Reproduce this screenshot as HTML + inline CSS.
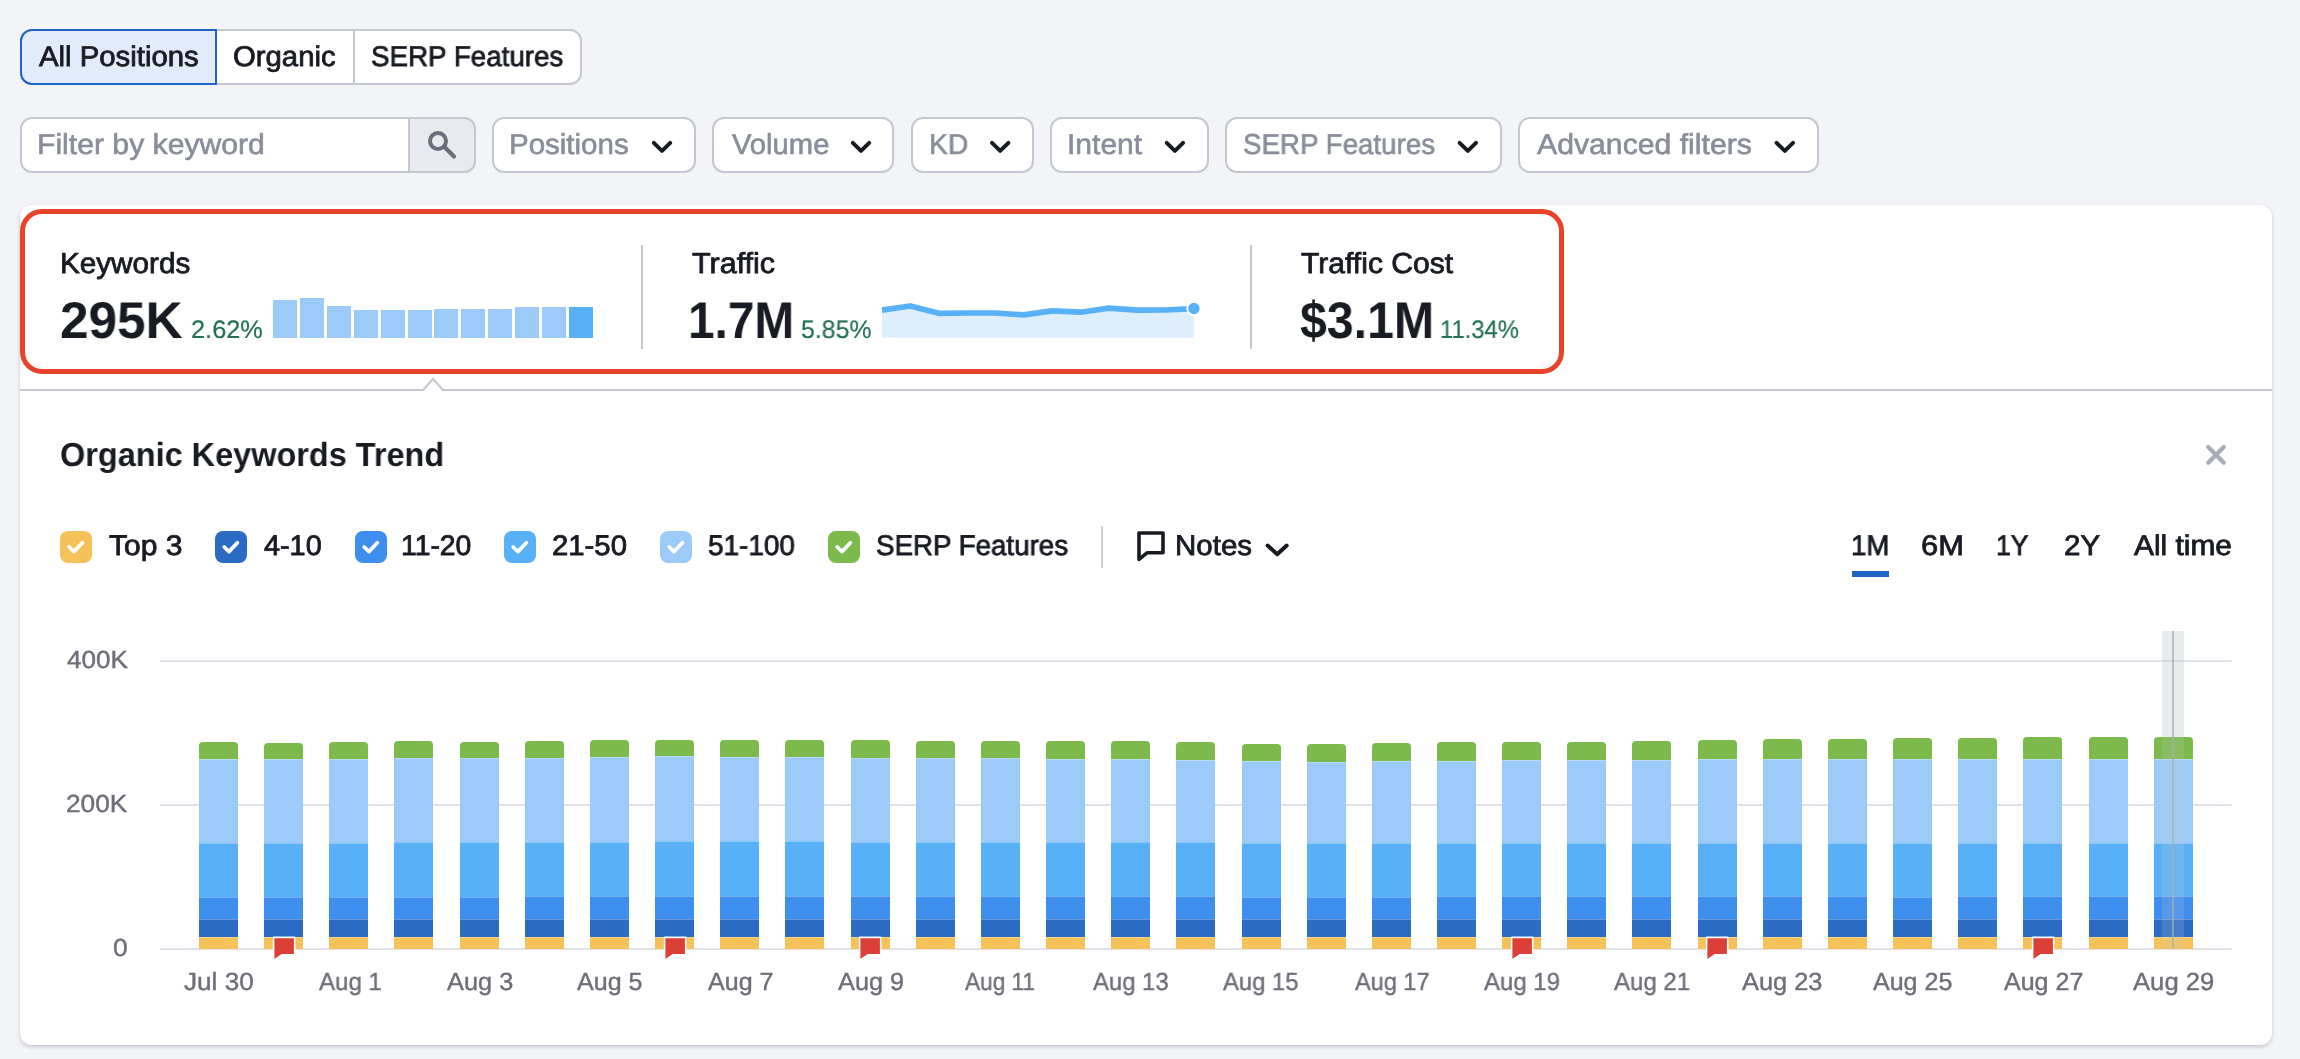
<!DOCTYPE html>
<html><head><meta charset="utf-8"><style>
html,body{margin:0;padding:0}
body{width:2300px;height:1059px;overflow:hidden;background:#f3f4f8;position:relative;font-family:"Liberation Sans", sans-serif}
.a{position:absolute}
.t{position:absolute;line-height:1;white-space:nowrap;transform-origin:0 0;will-change:transform}

</style></head><body>
<div class="a" style="left:20px;top:29px;width:562px;height:56px;box-sizing:border-box;border:2px solid #c4c7cf;border-radius:12px;background:#fff"></div>
<div class="a" style="left:353px;top:31px;width:2px;height:52px;background:#c4c7cf"></div>
<div class="a" style="left:20px;top:29px;width:197px;height:56px;box-sizing:border-box;border:2px solid #1f64c4;border-radius:12px 0 0 12px;background:#e2ebf9"></div>
<div class="a" style="left:20px;top:117px;width:456px;height:56px;box-sizing:border-box;border:2px solid #c4c7cf;border-radius:12px;background:#fff"></div>
<div class="a" style="left:408px;top:117px;width:68px;height:56px;box-sizing:border-box;border:2px solid #c4c7cf;border-radius:0 12px 12px 0;background:#e9eaef"></div>
<svg class="a" style="left:0;top:0" width="2300" height="1059"><circle cx="438" cy="141" r="8" fill="none" stroke="#6c6e79" stroke-width="4"/><path d="M445.5 148 L454 156.5" stroke="#6c6e79" stroke-width="4.2" stroke-linecap="round"/></svg>
<div class="a" style="left:492px;top:117px;width:204px;height:56px;box-sizing:border-box;border:2px solid #c4c7cf;border-radius:12px;background:#fff"></div>
<svg class="a" style="left:0;top:0" width="2300" height="1059"><path d="M653.8 142.8 L662.0 150.9 L670.2 142.8" fill="none" stroke="#191b23" stroke-width="4" stroke-linecap="round" stroke-linejoin="round"/></svg>
<div class="a" style="left:712px;top:117px;width:182px;height:56px;box-sizing:border-box;border:2px solid #c4c7cf;border-radius:12px;background:#fff"></div>
<svg class="a" style="left:0;top:0" width="2300" height="1059"><path d="M852.8 142.8 L861.0 150.9 L869.2 142.8" fill="none" stroke="#191b23" stroke-width="4" stroke-linecap="round" stroke-linejoin="round"/></svg>
<div class="a" style="left:911px;top:117px;width:123px;height:56px;box-sizing:border-box;border:2px solid #c4c7cf;border-radius:12px;background:#fff"></div>
<svg class="a" style="left:0;top:0" width="2300" height="1059"><path d="M992.0 142.8 L1000.2 150.9 L1008.4 142.8" fill="none" stroke="#191b23" stroke-width="4" stroke-linecap="round" stroke-linejoin="round"/></svg>
<div class="a" style="left:1050px;top:117px;width:159px;height:56px;box-sizing:border-box;border:2px solid #c4c7cf;border-radius:12px;background:#fff"></div>
<svg class="a" style="left:0;top:0" width="2300" height="1059"><path d="M1166.7 142.8 L1174.9 150.9 L1183.1 142.8" fill="none" stroke="#191b23" stroke-width="4" stroke-linecap="round" stroke-linejoin="round"/></svg>
<div class="a" style="left:1225px;top:117px;width:277px;height:56px;box-sizing:border-box;border:2px solid #c4c7cf;border-radius:12px;background:#fff"></div>
<svg class="a" style="left:0;top:0" width="2300" height="1059"><path d="M1459.6 142.8 L1467.8 150.9 L1476.0 142.8" fill="none" stroke="#191b23" stroke-width="4" stroke-linecap="round" stroke-linejoin="round"/></svg>
<div class="a" style="left:1518px;top:117px;width:301px;height:56px;box-sizing:border-box;border:2px solid #c4c7cf;border-radius:12px;background:#fff"></div>
<svg class="a" style="left:0;top:0" width="2300" height="1059"><path d="M1776.6 142.8 L1784.8 150.9 L1793.0 142.8" fill="none" stroke="#191b23" stroke-width="4" stroke-linecap="round" stroke-linejoin="round"/></svg>
<div class="a" style="left:20px;top:205px;width:2252px;height:840px;border-radius:12px;background:#fff;box-shadow:0 2px 4px rgba(25,27,35,0.2)"></div>
<svg class="a" style="left:0;top:0" width="2300" height="1059"><path d="M20 390 L423.2 390 L433 378.8 L442.8 390 L2272 390" fill="none" stroke="#c4c7cf" stroke-width="2.2"/></svg>
<div class="a" style="left:20px;top:209px;width:1544px;height:165px;box-sizing:border-box;border:5px solid #e8432a;border-radius:22px"></div>
<div class="a" style="left:640.5px;top:245px;width:2px;height:104px;background:#c4c7cf"></div>
<div class="a" style="left:1250px;top:245px;width:2px;height:104px;background:#c4c7cf"></div>
<div class="a" style="left:273.06px;top:299.80px;width:24.0px;height:38.10px;background:#9ccbf9"></div>
<div class="a" style="left:299.96px;top:297.90px;width:24.0px;height:40.00px;background:#9ccbf9"></div>
<div class="a" style="left:326.86px;top:306.20px;width:24.0px;height:31.70px;background:#9ccbf9"></div>
<div class="a" style="left:353.76px;top:310.30px;width:24.0px;height:27.60px;background:#9ccbf9"></div>
<div class="a" style="left:380.66px;top:309.60px;width:24.0px;height:28.30px;background:#9ccbf9"></div>
<div class="a" style="left:407.56px;top:310.10px;width:24.0px;height:27.80px;background:#9ccbf9"></div>
<div class="a" style="left:434.46px;top:309.20px;width:24.0px;height:28.70px;background:#9ccbf9"></div>
<div class="a" style="left:461.36px;top:308.80px;width:24.0px;height:29.10px;background:#9ccbf9"></div>
<div class="a" style="left:488.26px;top:308.50px;width:24.0px;height:29.40px;background:#9ccbf9"></div>
<div class="a" style="left:515.16px;top:307.10px;width:24.0px;height:30.80px;background:#9ccbf9"></div>
<div class="a" style="left:542.06px;top:307.40px;width:24.0px;height:30.50px;background:#9ccbf9"></div>
<div class="a" style="left:568.96px;top:306.60px;width:24.0px;height:31.30px;background:#58b0f7"></div>
<svg class="a" style="left:0;top:0" width="2300" height="1059"><path d="M882.00 310.10 L910.35 306.00 L938.70 313.30 L967.05 313.00 L995.40 313.00 L1023.75 314.90 L1052.10 310.90 L1080.45 312.20 L1108.80 308.10 L1137.15 310.10 L1165.50 310.00 L1193.85 308.70 L1193.85 337.7 L882.0 337.7 Z" fill="#ddeefd"/><path d="M882.00 310.10 L910.35 306.00 L938.70 313.30 L967.05 313.00 L995.40 313.00 L1023.75 314.90 L1052.10 310.90 L1080.45 312.20 L1108.80 308.10 L1137.15 310.10 L1165.50 310.00 L1193.85 308.70" fill="none" stroke="#58b0f7" stroke-width="5.7" stroke-linejoin="round"/><circle cx="1193.9" cy="308.5" r="6.6" fill="#58b0f7" stroke="#fff" stroke-width="1.8"/></svg>
<svg class="a" style="left:0;top:0" width="2300" height="1059"><path d="M2208.2 447 L2223.8 462.8 M2223.8 447 L2208.2 462.8" stroke="#a9abb6" stroke-width="4.2" stroke-linecap="round"/></svg>
<svg class="a" style="left:60.3px;top:531px" width="32" height="32"><rect x="0" y="0" width="32" height="32" rx="8" fill="#f5c25a"/><path d="M9.2 16.0 L14.0 20.6 L22.4 11.8" fill="none" stroke="#fff" stroke-width="3.7" stroke-linecap="round" stroke-linejoin="round"/></svg>
<svg class="a" style="left:215.0px;top:531px" width="32" height="32"><rect x="0" y="0" width="32" height="32" rx="8" fill="#2a6cc4"/><path d="M9.2 16.0 L14.0 20.6 L22.4 11.8" fill="none" stroke="#fff" stroke-width="3.7" stroke-linecap="round" stroke-linejoin="round"/></svg>
<svg class="a" style="left:355.0px;top:531px" width="32" height="32"><rect x="0" y="0" width="32" height="32" rx="8" fill="#3d8eed"/><path d="M9.2 16.0 L14.0 20.6 L22.4 11.8" fill="none" stroke="#fff" stroke-width="3.7" stroke-linecap="round" stroke-linejoin="round"/></svg>
<svg class="a" style="left:504.0px;top:531px" width="32" height="32"><rect x="0" y="0" width="32" height="32" rx="8" fill="#58b0f6"/><path d="M9.2 16.0 L14.0 20.6 L22.4 11.8" fill="none" stroke="#fff" stroke-width="3.7" stroke-linecap="round" stroke-linejoin="round"/></svg>
<svg class="a" style="left:660.0px;top:531px" width="32" height="32"><rect x="0" y="0" width="32" height="32" rx="8" fill="#9ccbf9"/><path d="M9.2 16.0 L14.0 20.6 L22.4 11.8" fill="none" stroke="#fff" stroke-width="3.7" stroke-linecap="round" stroke-linejoin="round"/></svg>
<svg class="a" style="left:828.0px;top:531px" width="32" height="32"><rect x="0" y="0" width="32" height="32" rx="8" fill="#7cba4b"/><path d="M9.2 16.0 L14.0 20.6 L22.4 11.8" fill="none" stroke="#fff" stroke-width="3.7" stroke-linecap="round" stroke-linejoin="round"/></svg>
<div class="a" style="left:1101px;top:526px;width:2px;height:42px;background:#cccdd2"></div>
<svg class="a" style="left:0;top:0" width="2300" height="1059"><path d="M1139 533 L1163 533 L1163 552.8 L1147 552.8 L1139 559.3 Z" fill="none" stroke="#191b23" stroke-width="3.6" stroke-linejoin="round"/></svg>
<svg class="a" style="left:0;top:0" width="2300" height="1059"><path d="M1267.6 545.5 L1277.2 554.2 L1286.7 545.5" fill="none" stroke="#191b23" stroke-width="4" stroke-linecap="round" stroke-linejoin="round"/></svg>
<div class="a" style="left:1852px;top:571px;width:37px;height:6px;background:#1f64c4"></div>
<div class="a" style="left:160px;top:660px;width:2072px;height:2px;background:#e0e1e9"></div>
<div class="a" style="left:160px;top:804px;width:2072px;height:2px;background:#e0e1e9"></div>
<div class="a" style="left:160px;top:948px;width:2072px;height:2px;background:#e0e1e9"></div>
<div class="a" style="left:2162px;top:631px;width:22.4px;height:318px;background:rgba(185,196,196,0.32)"></div>
<div class="a" style="left:199.00px;top:742px;width:39.0px;height:17px;background:#7cba4b;border-radius:4px 4px 0 0;"></div>
<div class="a" style="left:199.00px;top:759px;width:39.0px;height:84px;background:#9ccbf9;"></div>
<div class="a" style="left:199.00px;top:843px;width:39.0px;height:54px;background:#58b0f6;"></div>
<div class="a" style="left:199.00px;top:897px;width:39.0px;height:22px;background:#3d8eed;"></div>
<div class="a" style="left:199.00px;top:919px;width:39.0px;height:18px;background:#2a6cc4;"></div>
<div class="a" style="left:199.00px;top:937px;width:39.0px;height:12px;background:#f5c25a;"></div>
<div class="a" style="left:199.00px;top:759px;width:39.0px;height:1px;background:rgba(255,255,255,0.3)"></div>
<div class="a" style="left:199.00px;top:843px;width:39.0px;height:1px;background:rgba(255,255,255,0.3)"></div>
<div class="a" style="left:199.00px;top:897px;width:39.0px;height:1px;background:rgba(255,255,255,0.3)"></div>
<div class="a" style="left:199.00px;top:919px;width:39.0px;height:1px;background:rgba(255,255,255,0.3)"></div>
<div class="a" style="left:199.00px;top:937px;width:39.0px;height:1px;background:rgba(255,255,255,0.3)"></div>
<div class="a" style="left:264.16px;top:743px;width:39.0px;height:16px;background:#7cba4b;border-radius:4px 4px 0 0;"></div>
<div class="a" style="left:264.16px;top:759px;width:39.0px;height:84px;background:#9ccbf9;"></div>
<div class="a" style="left:264.16px;top:843px;width:39.0px;height:54px;background:#58b0f6;"></div>
<div class="a" style="left:264.16px;top:897px;width:39.0px;height:22px;background:#3d8eed;"></div>
<div class="a" style="left:264.16px;top:919px;width:39.0px;height:18px;background:#2a6cc4;"></div>
<div class="a" style="left:264.16px;top:937px;width:39.0px;height:12px;background:#f5c25a;"></div>
<div class="a" style="left:264.16px;top:759px;width:39.0px;height:1px;background:rgba(255,255,255,0.3)"></div>
<div class="a" style="left:264.16px;top:843px;width:39.0px;height:1px;background:rgba(255,255,255,0.3)"></div>
<div class="a" style="left:264.16px;top:897px;width:39.0px;height:1px;background:rgba(255,255,255,0.3)"></div>
<div class="a" style="left:264.16px;top:919px;width:39.0px;height:1px;background:rgba(255,255,255,0.3)"></div>
<div class="a" style="left:264.16px;top:937px;width:39.0px;height:1px;background:rgba(255,255,255,0.3)"></div>
<div class="a" style="left:329.31px;top:742px;width:39.0px;height:17px;background:#7cba4b;border-radius:4px 4px 0 0;"></div>
<div class="a" style="left:329.31px;top:759px;width:39.0px;height:84px;background:#9ccbf9;"></div>
<div class="a" style="left:329.31px;top:843px;width:39.0px;height:54px;background:#58b0f6;"></div>
<div class="a" style="left:329.31px;top:897px;width:39.0px;height:22px;background:#3d8eed;"></div>
<div class="a" style="left:329.31px;top:919px;width:39.0px;height:18px;background:#2a6cc4;"></div>
<div class="a" style="left:329.31px;top:937px;width:39.0px;height:12px;background:#f5c25a;"></div>
<div class="a" style="left:329.31px;top:759px;width:39.0px;height:1px;background:rgba(255,255,255,0.3)"></div>
<div class="a" style="left:329.31px;top:843px;width:39.0px;height:1px;background:rgba(255,255,255,0.3)"></div>
<div class="a" style="left:329.31px;top:897px;width:39.0px;height:1px;background:rgba(255,255,255,0.3)"></div>
<div class="a" style="left:329.31px;top:919px;width:39.0px;height:1px;background:rgba(255,255,255,0.3)"></div>
<div class="a" style="left:329.31px;top:937px;width:39.0px;height:1px;background:rgba(255,255,255,0.3)"></div>
<div class="a" style="left:394.47px;top:741px;width:39.0px;height:17px;background:#7cba4b;border-radius:4px 4px 0 0;"></div>
<div class="a" style="left:394.47px;top:758px;width:39.0px;height:84px;background:#9ccbf9;"></div>
<div class="a" style="left:394.47px;top:842px;width:39.0px;height:55px;background:#58b0f6;"></div>
<div class="a" style="left:394.47px;top:897px;width:39.0px;height:22px;background:#3d8eed;"></div>
<div class="a" style="left:394.47px;top:919px;width:39.0px;height:18px;background:#2a6cc4;"></div>
<div class="a" style="left:394.47px;top:937px;width:39.0px;height:12px;background:#f5c25a;"></div>
<div class="a" style="left:394.47px;top:758px;width:39.0px;height:1px;background:rgba(255,255,255,0.3)"></div>
<div class="a" style="left:394.47px;top:842px;width:39.0px;height:1px;background:rgba(255,255,255,0.3)"></div>
<div class="a" style="left:394.47px;top:897px;width:39.0px;height:1px;background:rgba(255,255,255,0.3)"></div>
<div class="a" style="left:394.47px;top:919px;width:39.0px;height:1px;background:rgba(255,255,255,0.3)"></div>
<div class="a" style="left:394.47px;top:937px;width:39.0px;height:1px;background:rgba(255,255,255,0.3)"></div>
<div class="a" style="left:459.63px;top:742px;width:39.0px;height:16px;background:#7cba4b;border-radius:4px 4px 0 0;"></div>
<div class="a" style="left:459.63px;top:758px;width:39.0px;height:84px;background:#9ccbf9;"></div>
<div class="a" style="left:459.63px;top:842px;width:39.0px;height:55px;background:#58b0f6;"></div>
<div class="a" style="left:459.63px;top:897px;width:39.0px;height:22px;background:#3d8eed;"></div>
<div class="a" style="left:459.63px;top:919px;width:39.0px;height:18px;background:#2a6cc4;"></div>
<div class="a" style="left:459.63px;top:937px;width:39.0px;height:12px;background:#f5c25a;"></div>
<div class="a" style="left:459.63px;top:758px;width:39.0px;height:1px;background:rgba(255,255,255,0.3)"></div>
<div class="a" style="left:459.63px;top:842px;width:39.0px;height:1px;background:rgba(255,255,255,0.3)"></div>
<div class="a" style="left:459.63px;top:897px;width:39.0px;height:1px;background:rgba(255,255,255,0.3)"></div>
<div class="a" style="left:459.63px;top:919px;width:39.0px;height:1px;background:rgba(255,255,255,0.3)"></div>
<div class="a" style="left:459.63px;top:937px;width:39.0px;height:1px;background:rgba(255,255,255,0.3)"></div>
<div class="a" style="left:524.78px;top:741px;width:39.0px;height:17px;background:#7cba4b;border-radius:4px 4px 0 0;"></div>
<div class="a" style="left:524.78px;top:758px;width:39.0px;height:84px;background:#9ccbf9;"></div>
<div class="a" style="left:524.78px;top:842px;width:39.0px;height:54px;background:#58b0f6;"></div>
<div class="a" style="left:524.78px;top:896px;width:39.0px;height:23px;background:#3d8eed;"></div>
<div class="a" style="left:524.78px;top:919px;width:39.0px;height:18px;background:#2a6cc4;"></div>
<div class="a" style="left:524.78px;top:937px;width:39.0px;height:12px;background:#f5c25a;"></div>
<div class="a" style="left:524.78px;top:758px;width:39.0px;height:1px;background:rgba(255,255,255,0.3)"></div>
<div class="a" style="left:524.78px;top:842px;width:39.0px;height:1px;background:rgba(255,255,255,0.3)"></div>
<div class="a" style="left:524.78px;top:896px;width:39.0px;height:1px;background:rgba(255,255,255,0.3)"></div>
<div class="a" style="left:524.78px;top:919px;width:39.0px;height:1px;background:rgba(255,255,255,0.3)"></div>
<div class="a" style="left:524.78px;top:937px;width:39.0px;height:1px;background:rgba(255,255,255,0.3)"></div>
<div class="a" style="left:589.94px;top:740px;width:39.0px;height:17px;background:#7cba4b;border-radius:4px 4px 0 0;"></div>
<div class="a" style="left:589.94px;top:757px;width:39.0px;height:85px;background:#9ccbf9;"></div>
<div class="a" style="left:589.94px;top:842px;width:39.0px;height:54px;background:#58b0f6;"></div>
<div class="a" style="left:589.94px;top:896px;width:39.0px;height:23px;background:#3d8eed;"></div>
<div class="a" style="left:589.94px;top:919px;width:39.0px;height:18px;background:#2a6cc4;"></div>
<div class="a" style="left:589.94px;top:937px;width:39.0px;height:12px;background:#f5c25a;"></div>
<div class="a" style="left:589.94px;top:757px;width:39.0px;height:1px;background:rgba(255,255,255,0.3)"></div>
<div class="a" style="left:589.94px;top:842px;width:39.0px;height:1px;background:rgba(255,255,255,0.3)"></div>
<div class="a" style="left:589.94px;top:896px;width:39.0px;height:1px;background:rgba(255,255,255,0.3)"></div>
<div class="a" style="left:589.94px;top:919px;width:39.0px;height:1px;background:rgba(255,255,255,0.3)"></div>
<div class="a" style="left:589.94px;top:937px;width:39.0px;height:1px;background:rgba(255,255,255,0.3)"></div>
<div class="a" style="left:655.10px;top:740px;width:39.0px;height:16px;background:#7cba4b;border-radius:4px 4px 0 0;"></div>
<div class="a" style="left:655.10px;top:756px;width:39.0px;height:85px;background:#9ccbf9;"></div>
<div class="a" style="left:655.10px;top:841px;width:39.0px;height:55px;background:#58b0f6;"></div>
<div class="a" style="left:655.10px;top:896px;width:39.0px;height:23px;background:#3d8eed;"></div>
<div class="a" style="left:655.10px;top:919px;width:39.0px;height:18px;background:#2a6cc4;"></div>
<div class="a" style="left:655.10px;top:937px;width:39.0px;height:12px;background:#f5c25a;"></div>
<div class="a" style="left:655.10px;top:756px;width:39.0px;height:1px;background:rgba(255,255,255,0.3)"></div>
<div class="a" style="left:655.10px;top:841px;width:39.0px;height:1px;background:rgba(255,255,255,0.3)"></div>
<div class="a" style="left:655.10px;top:896px;width:39.0px;height:1px;background:rgba(255,255,255,0.3)"></div>
<div class="a" style="left:655.10px;top:919px;width:39.0px;height:1px;background:rgba(255,255,255,0.3)"></div>
<div class="a" style="left:655.10px;top:937px;width:39.0px;height:1px;background:rgba(255,255,255,0.3)"></div>
<div class="a" style="left:720.25px;top:740px;width:39.0px;height:17px;background:#7cba4b;border-radius:4px 4px 0 0;"></div>
<div class="a" style="left:720.25px;top:757px;width:39.0px;height:84px;background:#9ccbf9;"></div>
<div class="a" style="left:720.25px;top:841px;width:39.0px;height:55px;background:#58b0f6;"></div>
<div class="a" style="left:720.25px;top:896px;width:39.0px;height:23px;background:#3d8eed;"></div>
<div class="a" style="left:720.25px;top:919px;width:39.0px;height:18px;background:#2a6cc4;"></div>
<div class="a" style="left:720.25px;top:937px;width:39.0px;height:12px;background:#f5c25a;"></div>
<div class="a" style="left:720.25px;top:757px;width:39.0px;height:1px;background:rgba(255,255,255,0.3)"></div>
<div class="a" style="left:720.25px;top:841px;width:39.0px;height:1px;background:rgba(255,255,255,0.3)"></div>
<div class="a" style="left:720.25px;top:896px;width:39.0px;height:1px;background:rgba(255,255,255,0.3)"></div>
<div class="a" style="left:720.25px;top:919px;width:39.0px;height:1px;background:rgba(255,255,255,0.3)"></div>
<div class="a" style="left:720.25px;top:937px;width:39.0px;height:1px;background:rgba(255,255,255,0.3)"></div>
<div class="a" style="left:785.41px;top:740px;width:39.0px;height:17px;background:#7cba4b;border-radius:4px 4px 0 0;"></div>
<div class="a" style="left:785.41px;top:757px;width:39.0px;height:84px;background:#9ccbf9;"></div>
<div class="a" style="left:785.41px;top:841px;width:39.0px;height:55px;background:#58b0f6;"></div>
<div class="a" style="left:785.41px;top:896px;width:39.0px;height:23px;background:#3d8eed;"></div>
<div class="a" style="left:785.41px;top:919px;width:39.0px;height:18px;background:#2a6cc4;"></div>
<div class="a" style="left:785.41px;top:937px;width:39.0px;height:12px;background:#f5c25a;"></div>
<div class="a" style="left:785.41px;top:757px;width:39.0px;height:1px;background:rgba(255,255,255,0.3)"></div>
<div class="a" style="left:785.41px;top:841px;width:39.0px;height:1px;background:rgba(255,255,255,0.3)"></div>
<div class="a" style="left:785.41px;top:896px;width:39.0px;height:1px;background:rgba(255,255,255,0.3)"></div>
<div class="a" style="left:785.41px;top:919px;width:39.0px;height:1px;background:rgba(255,255,255,0.3)"></div>
<div class="a" style="left:785.41px;top:937px;width:39.0px;height:1px;background:rgba(255,255,255,0.3)"></div>
<div class="a" style="left:850.57px;top:740px;width:39.0px;height:18px;background:#7cba4b;border-radius:4px 4px 0 0;"></div>
<div class="a" style="left:850.57px;top:758px;width:39.0px;height:84px;background:#9ccbf9;"></div>
<div class="a" style="left:850.57px;top:842px;width:39.0px;height:54px;background:#58b0f6;"></div>
<div class="a" style="left:850.57px;top:896px;width:39.0px;height:23px;background:#3d8eed;"></div>
<div class="a" style="left:850.57px;top:919px;width:39.0px;height:18px;background:#2a6cc4;"></div>
<div class="a" style="left:850.57px;top:937px;width:39.0px;height:12px;background:#f5c25a;"></div>
<div class="a" style="left:850.57px;top:758px;width:39.0px;height:1px;background:rgba(255,255,255,0.3)"></div>
<div class="a" style="left:850.57px;top:842px;width:39.0px;height:1px;background:rgba(255,255,255,0.3)"></div>
<div class="a" style="left:850.57px;top:896px;width:39.0px;height:1px;background:rgba(255,255,255,0.3)"></div>
<div class="a" style="left:850.57px;top:919px;width:39.0px;height:1px;background:rgba(255,255,255,0.3)"></div>
<div class="a" style="left:850.57px;top:937px;width:39.0px;height:1px;background:rgba(255,255,255,0.3)"></div>
<div class="a" style="left:915.72px;top:741px;width:39.0px;height:17px;background:#7cba4b;border-radius:4px 4px 0 0;"></div>
<div class="a" style="left:915.72px;top:758px;width:39.0px;height:84px;background:#9ccbf9;"></div>
<div class="a" style="left:915.72px;top:842px;width:39.0px;height:54px;background:#58b0f6;"></div>
<div class="a" style="left:915.72px;top:896px;width:39.0px;height:23px;background:#3d8eed;"></div>
<div class="a" style="left:915.72px;top:919px;width:39.0px;height:18px;background:#2a6cc4;"></div>
<div class="a" style="left:915.72px;top:937px;width:39.0px;height:12px;background:#f5c25a;"></div>
<div class="a" style="left:915.72px;top:758px;width:39.0px;height:1px;background:rgba(255,255,255,0.3)"></div>
<div class="a" style="left:915.72px;top:842px;width:39.0px;height:1px;background:rgba(255,255,255,0.3)"></div>
<div class="a" style="left:915.72px;top:896px;width:39.0px;height:1px;background:rgba(255,255,255,0.3)"></div>
<div class="a" style="left:915.72px;top:919px;width:39.0px;height:1px;background:rgba(255,255,255,0.3)"></div>
<div class="a" style="left:915.72px;top:937px;width:39.0px;height:1px;background:rgba(255,255,255,0.3)"></div>
<div class="a" style="left:980.88px;top:741px;width:39.0px;height:17px;background:#7cba4b;border-radius:4px 4px 0 0;"></div>
<div class="a" style="left:980.88px;top:758px;width:39.0px;height:84px;background:#9ccbf9;"></div>
<div class="a" style="left:980.88px;top:842px;width:39.0px;height:54px;background:#58b0f6;"></div>
<div class="a" style="left:980.88px;top:896px;width:39.0px;height:23px;background:#3d8eed;"></div>
<div class="a" style="left:980.88px;top:919px;width:39.0px;height:18px;background:#2a6cc4;"></div>
<div class="a" style="left:980.88px;top:937px;width:39.0px;height:12px;background:#f5c25a;"></div>
<div class="a" style="left:980.88px;top:758px;width:39.0px;height:1px;background:rgba(255,255,255,0.3)"></div>
<div class="a" style="left:980.88px;top:842px;width:39.0px;height:1px;background:rgba(255,255,255,0.3)"></div>
<div class="a" style="left:980.88px;top:896px;width:39.0px;height:1px;background:rgba(255,255,255,0.3)"></div>
<div class="a" style="left:980.88px;top:919px;width:39.0px;height:1px;background:rgba(255,255,255,0.3)"></div>
<div class="a" style="left:980.88px;top:937px;width:39.0px;height:1px;background:rgba(255,255,255,0.3)"></div>
<div class="a" style="left:1046.04px;top:741px;width:39.0px;height:18px;background:#7cba4b;border-radius:4px 4px 0 0;"></div>
<div class="a" style="left:1046.04px;top:759px;width:39.0px;height:83px;background:#9ccbf9;"></div>
<div class="a" style="left:1046.04px;top:842px;width:39.0px;height:54px;background:#58b0f6;"></div>
<div class="a" style="left:1046.04px;top:896px;width:39.0px;height:23px;background:#3d8eed;"></div>
<div class="a" style="left:1046.04px;top:919px;width:39.0px;height:18px;background:#2a6cc4;"></div>
<div class="a" style="left:1046.04px;top:937px;width:39.0px;height:12px;background:#f5c25a;"></div>
<div class="a" style="left:1046.04px;top:759px;width:39.0px;height:1px;background:rgba(255,255,255,0.3)"></div>
<div class="a" style="left:1046.04px;top:842px;width:39.0px;height:1px;background:rgba(255,255,255,0.3)"></div>
<div class="a" style="left:1046.04px;top:896px;width:39.0px;height:1px;background:rgba(255,255,255,0.3)"></div>
<div class="a" style="left:1046.04px;top:919px;width:39.0px;height:1px;background:rgba(255,255,255,0.3)"></div>
<div class="a" style="left:1046.04px;top:937px;width:39.0px;height:1px;background:rgba(255,255,255,0.3)"></div>
<div class="a" style="left:1111.19px;top:741px;width:39.0px;height:18px;background:#7cba4b;border-radius:4px 4px 0 0;"></div>
<div class="a" style="left:1111.19px;top:759px;width:39.0px;height:83px;background:#9ccbf9;"></div>
<div class="a" style="left:1111.19px;top:842px;width:39.0px;height:54px;background:#58b0f6;"></div>
<div class="a" style="left:1111.19px;top:896px;width:39.0px;height:23px;background:#3d8eed;"></div>
<div class="a" style="left:1111.19px;top:919px;width:39.0px;height:18px;background:#2a6cc4;"></div>
<div class="a" style="left:1111.19px;top:937px;width:39.0px;height:12px;background:#f5c25a;"></div>
<div class="a" style="left:1111.19px;top:759px;width:39.0px;height:1px;background:rgba(255,255,255,0.3)"></div>
<div class="a" style="left:1111.19px;top:842px;width:39.0px;height:1px;background:rgba(255,255,255,0.3)"></div>
<div class="a" style="left:1111.19px;top:896px;width:39.0px;height:1px;background:rgba(255,255,255,0.3)"></div>
<div class="a" style="left:1111.19px;top:919px;width:39.0px;height:1px;background:rgba(255,255,255,0.3)"></div>
<div class="a" style="left:1111.19px;top:937px;width:39.0px;height:1px;background:rgba(255,255,255,0.3)"></div>
<div class="a" style="left:1176.35px;top:742px;width:39.0px;height:18px;background:#7cba4b;border-radius:4px 4px 0 0;"></div>
<div class="a" style="left:1176.35px;top:760px;width:39.0px;height:82px;background:#9ccbf9;"></div>
<div class="a" style="left:1176.35px;top:842px;width:39.0px;height:54px;background:#58b0f6;"></div>
<div class="a" style="left:1176.35px;top:896px;width:39.0px;height:23px;background:#3d8eed;"></div>
<div class="a" style="left:1176.35px;top:919px;width:39.0px;height:18px;background:#2a6cc4;"></div>
<div class="a" style="left:1176.35px;top:937px;width:39.0px;height:12px;background:#f5c25a;"></div>
<div class="a" style="left:1176.35px;top:760px;width:39.0px;height:1px;background:rgba(255,255,255,0.3)"></div>
<div class="a" style="left:1176.35px;top:842px;width:39.0px;height:1px;background:rgba(255,255,255,0.3)"></div>
<div class="a" style="left:1176.35px;top:896px;width:39.0px;height:1px;background:rgba(255,255,255,0.3)"></div>
<div class="a" style="left:1176.35px;top:919px;width:39.0px;height:1px;background:rgba(255,255,255,0.3)"></div>
<div class="a" style="left:1176.35px;top:937px;width:39.0px;height:1px;background:rgba(255,255,255,0.3)"></div>
<div class="a" style="left:1241.51px;top:744px;width:39.0px;height:17px;background:#7cba4b;border-radius:4px 4px 0 0;"></div>
<div class="a" style="left:1241.51px;top:761px;width:39.0px;height:82px;background:#9ccbf9;"></div>
<div class="a" style="left:1241.51px;top:843px;width:39.0px;height:54px;background:#58b0f6;"></div>
<div class="a" style="left:1241.51px;top:897px;width:39.0px;height:22px;background:#3d8eed;"></div>
<div class="a" style="left:1241.51px;top:919px;width:39.0px;height:18px;background:#2a6cc4;"></div>
<div class="a" style="left:1241.51px;top:937px;width:39.0px;height:12px;background:#f5c25a;"></div>
<div class="a" style="left:1241.51px;top:761px;width:39.0px;height:1px;background:rgba(255,255,255,0.3)"></div>
<div class="a" style="left:1241.51px;top:843px;width:39.0px;height:1px;background:rgba(255,255,255,0.3)"></div>
<div class="a" style="left:1241.51px;top:897px;width:39.0px;height:1px;background:rgba(255,255,255,0.3)"></div>
<div class="a" style="left:1241.51px;top:919px;width:39.0px;height:1px;background:rgba(255,255,255,0.3)"></div>
<div class="a" style="left:1241.51px;top:937px;width:39.0px;height:1px;background:rgba(255,255,255,0.3)"></div>
<div class="a" style="left:1306.66px;top:744px;width:39.0px;height:18px;background:#7cba4b;border-radius:4px 4px 0 0;"></div>
<div class="a" style="left:1306.66px;top:762px;width:39.0px;height:81px;background:#9ccbf9;"></div>
<div class="a" style="left:1306.66px;top:843px;width:39.0px;height:54px;background:#58b0f6;"></div>
<div class="a" style="left:1306.66px;top:897px;width:39.0px;height:22px;background:#3d8eed;"></div>
<div class="a" style="left:1306.66px;top:919px;width:39.0px;height:18px;background:#2a6cc4;"></div>
<div class="a" style="left:1306.66px;top:937px;width:39.0px;height:12px;background:#f5c25a;"></div>
<div class="a" style="left:1306.66px;top:762px;width:39.0px;height:1px;background:rgba(255,255,255,0.3)"></div>
<div class="a" style="left:1306.66px;top:843px;width:39.0px;height:1px;background:rgba(255,255,255,0.3)"></div>
<div class="a" style="left:1306.66px;top:897px;width:39.0px;height:1px;background:rgba(255,255,255,0.3)"></div>
<div class="a" style="left:1306.66px;top:919px;width:39.0px;height:1px;background:rgba(255,255,255,0.3)"></div>
<div class="a" style="left:1306.66px;top:937px;width:39.0px;height:1px;background:rgba(255,255,255,0.3)"></div>
<div class="a" style="left:1371.82px;top:743px;width:39.0px;height:18px;background:#7cba4b;border-radius:4px 4px 0 0;"></div>
<div class="a" style="left:1371.82px;top:761px;width:39.0px;height:82px;background:#9ccbf9;"></div>
<div class="a" style="left:1371.82px;top:843px;width:39.0px;height:54px;background:#58b0f6;"></div>
<div class="a" style="left:1371.82px;top:897px;width:39.0px;height:22px;background:#3d8eed;"></div>
<div class="a" style="left:1371.82px;top:919px;width:39.0px;height:18px;background:#2a6cc4;"></div>
<div class="a" style="left:1371.82px;top:937px;width:39.0px;height:12px;background:#f5c25a;"></div>
<div class="a" style="left:1371.82px;top:761px;width:39.0px;height:1px;background:rgba(255,255,255,0.3)"></div>
<div class="a" style="left:1371.82px;top:843px;width:39.0px;height:1px;background:rgba(255,255,255,0.3)"></div>
<div class="a" style="left:1371.82px;top:897px;width:39.0px;height:1px;background:rgba(255,255,255,0.3)"></div>
<div class="a" style="left:1371.82px;top:919px;width:39.0px;height:1px;background:rgba(255,255,255,0.3)"></div>
<div class="a" style="left:1371.82px;top:937px;width:39.0px;height:1px;background:rgba(255,255,255,0.3)"></div>
<div class="a" style="left:1436.98px;top:742px;width:39.0px;height:19px;background:#7cba4b;border-radius:4px 4px 0 0;"></div>
<div class="a" style="left:1436.98px;top:761px;width:39.0px;height:82px;background:#9ccbf9;"></div>
<div class="a" style="left:1436.98px;top:843px;width:39.0px;height:53px;background:#58b0f6;"></div>
<div class="a" style="left:1436.98px;top:896px;width:39.0px;height:23px;background:#3d8eed;"></div>
<div class="a" style="left:1436.98px;top:919px;width:39.0px;height:18px;background:#2a6cc4;"></div>
<div class="a" style="left:1436.98px;top:937px;width:39.0px;height:12px;background:#f5c25a;"></div>
<div class="a" style="left:1436.98px;top:761px;width:39.0px;height:1px;background:rgba(255,255,255,0.3)"></div>
<div class="a" style="left:1436.98px;top:843px;width:39.0px;height:1px;background:rgba(255,255,255,0.3)"></div>
<div class="a" style="left:1436.98px;top:896px;width:39.0px;height:1px;background:rgba(255,255,255,0.3)"></div>
<div class="a" style="left:1436.98px;top:919px;width:39.0px;height:1px;background:rgba(255,255,255,0.3)"></div>
<div class="a" style="left:1436.98px;top:937px;width:39.0px;height:1px;background:rgba(255,255,255,0.3)"></div>
<div class="a" style="left:1502.13px;top:742px;width:39.0px;height:18px;background:#7cba4b;border-radius:4px 4px 0 0;"></div>
<div class="a" style="left:1502.13px;top:760px;width:39.0px;height:83px;background:#9ccbf9;"></div>
<div class="a" style="left:1502.13px;top:843px;width:39.0px;height:53px;background:#58b0f6;"></div>
<div class="a" style="left:1502.13px;top:896px;width:39.0px;height:23px;background:#3d8eed;"></div>
<div class="a" style="left:1502.13px;top:919px;width:39.0px;height:18px;background:#2a6cc4;"></div>
<div class="a" style="left:1502.13px;top:937px;width:39.0px;height:12px;background:#f5c25a;"></div>
<div class="a" style="left:1502.13px;top:760px;width:39.0px;height:1px;background:rgba(255,255,255,0.3)"></div>
<div class="a" style="left:1502.13px;top:843px;width:39.0px;height:1px;background:rgba(255,255,255,0.3)"></div>
<div class="a" style="left:1502.13px;top:896px;width:39.0px;height:1px;background:rgba(255,255,255,0.3)"></div>
<div class="a" style="left:1502.13px;top:919px;width:39.0px;height:1px;background:rgba(255,255,255,0.3)"></div>
<div class="a" style="left:1502.13px;top:937px;width:39.0px;height:1px;background:rgba(255,255,255,0.3)"></div>
<div class="a" style="left:1567.29px;top:742px;width:39.0px;height:18px;background:#7cba4b;border-radius:4px 4px 0 0;"></div>
<div class="a" style="left:1567.29px;top:760px;width:39.0px;height:83px;background:#9ccbf9;"></div>
<div class="a" style="left:1567.29px;top:843px;width:39.0px;height:53px;background:#58b0f6;"></div>
<div class="a" style="left:1567.29px;top:896px;width:39.0px;height:23px;background:#3d8eed;"></div>
<div class="a" style="left:1567.29px;top:919px;width:39.0px;height:18px;background:#2a6cc4;"></div>
<div class="a" style="left:1567.29px;top:937px;width:39.0px;height:12px;background:#f5c25a;"></div>
<div class="a" style="left:1567.29px;top:760px;width:39.0px;height:1px;background:rgba(255,255,255,0.3)"></div>
<div class="a" style="left:1567.29px;top:843px;width:39.0px;height:1px;background:rgba(255,255,255,0.3)"></div>
<div class="a" style="left:1567.29px;top:896px;width:39.0px;height:1px;background:rgba(255,255,255,0.3)"></div>
<div class="a" style="left:1567.29px;top:919px;width:39.0px;height:1px;background:rgba(255,255,255,0.3)"></div>
<div class="a" style="left:1567.29px;top:937px;width:39.0px;height:1px;background:rgba(255,255,255,0.3)"></div>
<div class="a" style="left:1632.45px;top:741px;width:39.0px;height:19px;background:#7cba4b;border-radius:4px 4px 0 0;"></div>
<div class="a" style="left:1632.45px;top:760px;width:39.0px;height:83px;background:#9ccbf9;"></div>
<div class="a" style="left:1632.45px;top:843px;width:39.0px;height:53px;background:#58b0f6;"></div>
<div class="a" style="left:1632.45px;top:896px;width:39.0px;height:23px;background:#3d8eed;"></div>
<div class="a" style="left:1632.45px;top:919px;width:39.0px;height:18px;background:#2a6cc4;"></div>
<div class="a" style="left:1632.45px;top:937px;width:39.0px;height:12px;background:#f5c25a;"></div>
<div class="a" style="left:1632.45px;top:760px;width:39.0px;height:1px;background:rgba(255,255,255,0.3)"></div>
<div class="a" style="left:1632.45px;top:843px;width:39.0px;height:1px;background:rgba(255,255,255,0.3)"></div>
<div class="a" style="left:1632.45px;top:896px;width:39.0px;height:1px;background:rgba(255,255,255,0.3)"></div>
<div class="a" style="left:1632.45px;top:919px;width:39.0px;height:1px;background:rgba(255,255,255,0.3)"></div>
<div class="a" style="left:1632.45px;top:937px;width:39.0px;height:1px;background:rgba(255,255,255,0.3)"></div>
<div class="a" style="left:1697.60px;top:740px;width:39.0px;height:19px;background:#7cba4b;border-radius:4px 4px 0 0;"></div>
<div class="a" style="left:1697.60px;top:759px;width:39.0px;height:84px;background:#9ccbf9;"></div>
<div class="a" style="left:1697.60px;top:843px;width:39.0px;height:53px;background:#58b0f6;"></div>
<div class="a" style="left:1697.60px;top:896px;width:39.0px;height:23px;background:#3d8eed;"></div>
<div class="a" style="left:1697.60px;top:919px;width:39.0px;height:18px;background:#2a6cc4;"></div>
<div class="a" style="left:1697.60px;top:937px;width:39.0px;height:12px;background:#f5c25a;"></div>
<div class="a" style="left:1697.60px;top:759px;width:39.0px;height:1px;background:rgba(255,255,255,0.3)"></div>
<div class="a" style="left:1697.60px;top:843px;width:39.0px;height:1px;background:rgba(255,255,255,0.3)"></div>
<div class="a" style="left:1697.60px;top:896px;width:39.0px;height:1px;background:rgba(255,255,255,0.3)"></div>
<div class="a" style="left:1697.60px;top:919px;width:39.0px;height:1px;background:rgba(255,255,255,0.3)"></div>
<div class="a" style="left:1697.60px;top:937px;width:39.0px;height:1px;background:rgba(255,255,255,0.3)"></div>
<div class="a" style="left:1762.76px;top:739px;width:39.0px;height:20px;background:#7cba4b;border-radius:4px 4px 0 0;"></div>
<div class="a" style="left:1762.76px;top:759px;width:39.0px;height:84px;background:#9ccbf9;"></div>
<div class="a" style="left:1762.76px;top:843px;width:39.0px;height:53px;background:#58b0f6;"></div>
<div class="a" style="left:1762.76px;top:896px;width:39.0px;height:23px;background:#3d8eed;"></div>
<div class="a" style="left:1762.76px;top:919px;width:39.0px;height:18px;background:#2a6cc4;"></div>
<div class="a" style="left:1762.76px;top:937px;width:39.0px;height:12px;background:#f5c25a;"></div>
<div class="a" style="left:1762.76px;top:759px;width:39.0px;height:1px;background:rgba(255,255,255,0.3)"></div>
<div class="a" style="left:1762.76px;top:843px;width:39.0px;height:1px;background:rgba(255,255,255,0.3)"></div>
<div class="a" style="left:1762.76px;top:896px;width:39.0px;height:1px;background:rgba(255,255,255,0.3)"></div>
<div class="a" style="left:1762.76px;top:919px;width:39.0px;height:1px;background:rgba(255,255,255,0.3)"></div>
<div class="a" style="left:1762.76px;top:937px;width:39.0px;height:1px;background:rgba(255,255,255,0.3)"></div>
<div class="a" style="left:1827.92px;top:739px;width:39.0px;height:20px;background:#7cba4b;border-radius:4px 4px 0 0;"></div>
<div class="a" style="left:1827.92px;top:759px;width:39.0px;height:84px;background:#9ccbf9;"></div>
<div class="a" style="left:1827.92px;top:843px;width:39.0px;height:53px;background:#58b0f6;"></div>
<div class="a" style="left:1827.92px;top:896px;width:39.0px;height:23px;background:#3d8eed;"></div>
<div class="a" style="left:1827.92px;top:919px;width:39.0px;height:18px;background:#2a6cc4;"></div>
<div class="a" style="left:1827.92px;top:937px;width:39.0px;height:12px;background:#f5c25a;"></div>
<div class="a" style="left:1827.92px;top:759px;width:39.0px;height:1px;background:rgba(255,255,255,0.3)"></div>
<div class="a" style="left:1827.92px;top:843px;width:39.0px;height:1px;background:rgba(255,255,255,0.3)"></div>
<div class="a" style="left:1827.92px;top:896px;width:39.0px;height:1px;background:rgba(255,255,255,0.3)"></div>
<div class="a" style="left:1827.92px;top:919px;width:39.0px;height:1px;background:rgba(255,255,255,0.3)"></div>
<div class="a" style="left:1827.92px;top:937px;width:39.0px;height:1px;background:rgba(255,255,255,0.3)"></div>
<div class="a" style="left:1893.07px;top:738px;width:39.0px;height:21px;background:#7cba4b;border-radius:4px 4px 0 0;"></div>
<div class="a" style="left:1893.07px;top:759px;width:39.0px;height:84px;background:#9ccbf9;"></div>
<div class="a" style="left:1893.07px;top:843px;width:39.0px;height:54px;background:#58b0f6;"></div>
<div class="a" style="left:1893.07px;top:897px;width:39.0px;height:22px;background:#3d8eed;"></div>
<div class="a" style="left:1893.07px;top:919px;width:39.0px;height:18px;background:#2a6cc4;"></div>
<div class="a" style="left:1893.07px;top:937px;width:39.0px;height:12px;background:#f5c25a;"></div>
<div class="a" style="left:1893.07px;top:759px;width:39.0px;height:1px;background:rgba(255,255,255,0.3)"></div>
<div class="a" style="left:1893.07px;top:843px;width:39.0px;height:1px;background:rgba(255,255,255,0.3)"></div>
<div class="a" style="left:1893.07px;top:897px;width:39.0px;height:1px;background:rgba(255,255,255,0.3)"></div>
<div class="a" style="left:1893.07px;top:919px;width:39.0px;height:1px;background:rgba(255,255,255,0.3)"></div>
<div class="a" style="left:1893.07px;top:937px;width:39.0px;height:1px;background:rgba(255,255,255,0.3)"></div>
<div class="a" style="left:1958.23px;top:738px;width:39.0px;height:21px;background:#7cba4b;border-radius:4px 4px 0 0;"></div>
<div class="a" style="left:1958.23px;top:759px;width:39.0px;height:84px;background:#9ccbf9;"></div>
<div class="a" style="left:1958.23px;top:843px;width:39.0px;height:53px;background:#58b0f6;"></div>
<div class="a" style="left:1958.23px;top:896px;width:39.0px;height:23px;background:#3d8eed;"></div>
<div class="a" style="left:1958.23px;top:919px;width:39.0px;height:18px;background:#2a6cc4;"></div>
<div class="a" style="left:1958.23px;top:937px;width:39.0px;height:12px;background:#f5c25a;"></div>
<div class="a" style="left:1958.23px;top:759px;width:39.0px;height:1px;background:rgba(255,255,255,0.3)"></div>
<div class="a" style="left:1958.23px;top:843px;width:39.0px;height:1px;background:rgba(255,255,255,0.3)"></div>
<div class="a" style="left:1958.23px;top:896px;width:39.0px;height:1px;background:rgba(255,255,255,0.3)"></div>
<div class="a" style="left:1958.23px;top:919px;width:39.0px;height:1px;background:rgba(255,255,255,0.3)"></div>
<div class="a" style="left:1958.23px;top:937px;width:39.0px;height:1px;background:rgba(255,255,255,0.3)"></div>
<div class="a" style="left:2023.39px;top:737px;width:39.0px;height:22px;background:#7cba4b;border-radius:4px 4px 0 0;"></div>
<div class="a" style="left:2023.39px;top:759px;width:39.0px;height:84px;background:#9ccbf9;"></div>
<div class="a" style="left:2023.39px;top:843px;width:39.0px;height:53px;background:#58b0f6;"></div>
<div class="a" style="left:2023.39px;top:896px;width:39.0px;height:23px;background:#3d8eed;"></div>
<div class="a" style="left:2023.39px;top:919px;width:39.0px;height:18px;background:#2a6cc4;"></div>
<div class="a" style="left:2023.39px;top:937px;width:39.0px;height:12px;background:#f5c25a;"></div>
<div class="a" style="left:2023.39px;top:759px;width:39.0px;height:1px;background:rgba(255,255,255,0.3)"></div>
<div class="a" style="left:2023.39px;top:843px;width:39.0px;height:1px;background:rgba(255,255,255,0.3)"></div>
<div class="a" style="left:2023.39px;top:896px;width:39.0px;height:1px;background:rgba(255,255,255,0.3)"></div>
<div class="a" style="left:2023.39px;top:919px;width:39.0px;height:1px;background:rgba(255,255,255,0.3)"></div>
<div class="a" style="left:2023.39px;top:937px;width:39.0px;height:1px;background:rgba(255,255,255,0.3)"></div>
<div class="a" style="left:2088.54px;top:737px;width:39.0px;height:22px;background:#7cba4b;border-radius:4px 4px 0 0;"></div>
<div class="a" style="left:2088.54px;top:759px;width:39.0px;height:84px;background:#9ccbf9;"></div>
<div class="a" style="left:2088.54px;top:843px;width:39.0px;height:53px;background:#58b0f6;"></div>
<div class="a" style="left:2088.54px;top:896px;width:39.0px;height:23px;background:#3d8eed;"></div>
<div class="a" style="left:2088.54px;top:919px;width:39.0px;height:18px;background:#2a6cc4;"></div>
<div class="a" style="left:2088.54px;top:937px;width:39.0px;height:12px;background:#f5c25a;"></div>
<div class="a" style="left:2088.54px;top:759px;width:39.0px;height:1px;background:rgba(255,255,255,0.3)"></div>
<div class="a" style="left:2088.54px;top:843px;width:39.0px;height:1px;background:rgba(255,255,255,0.3)"></div>
<div class="a" style="left:2088.54px;top:896px;width:39.0px;height:1px;background:rgba(255,255,255,0.3)"></div>
<div class="a" style="left:2088.54px;top:919px;width:39.0px;height:1px;background:rgba(255,255,255,0.3)"></div>
<div class="a" style="left:2088.54px;top:937px;width:39.0px;height:1px;background:rgba(255,255,255,0.3)"></div>
<div class="a" style="left:2153.70px;top:737px;width:39.0px;height:22px;background:#7cba4b;border-radius:4px 4px 0 0;"></div>
<div class="a" style="left:2153.70px;top:759px;width:39.0px;height:84px;background:#9ccbf9;"></div>
<div class="a" style="left:2153.70px;top:843px;width:39.0px;height:53px;background:#58b0f6;"></div>
<div class="a" style="left:2153.70px;top:896px;width:39.0px;height:23px;background:#3d8eed;"></div>
<div class="a" style="left:2153.70px;top:919px;width:39.0px;height:18px;background:#2a6cc4;"></div>
<div class="a" style="left:2153.70px;top:937px;width:39.0px;height:12px;background:#f5c25a;"></div>
<div class="a" style="left:2153.70px;top:759px;width:39.0px;height:1px;background:rgba(255,255,255,0.3)"></div>
<div class="a" style="left:2153.70px;top:843px;width:39.0px;height:1px;background:rgba(255,255,255,0.3)"></div>
<div class="a" style="left:2153.70px;top:896px;width:39.0px;height:1px;background:rgba(255,255,255,0.3)"></div>
<div class="a" style="left:2153.70px;top:919px;width:39.0px;height:1px;background:rgba(255,255,255,0.3)"></div>
<div class="a" style="left:2153.70px;top:937px;width:39.0px;height:1px;background:rgba(255,255,255,0.3)"></div>
<div class="a" style="left:2172.4px;top:631px;width:2px;height:318px;background:rgba(160,166,170,0.68)"></div>
<div class="a" style="left:2162px;top:737px;width:22.4px;height:212px;background:rgba(200,205,210,0.18)"></div>
<svg class="a" style="left:268.66px;top:935px" width="30" height="28"><path d="M4.6 2.4 L25.7 2.4 L25.7 19.8 L12.8 19.8 L4.6 25.4 Z" fill="#dc3f36" stroke="#fff" stroke-width="1.6" stroke-linejoin="round"/></svg>
<svg class="a" style="left:659.60px;top:935px" width="30" height="28"><path d="M4.6 2.4 L25.7 2.4 L25.7 19.8 L12.8 19.8 L4.6 25.4 Z" fill="#dc3f36" stroke="#fff" stroke-width="1.6" stroke-linejoin="round"/></svg>
<svg class="a" style="left:855.07px;top:935px" width="30" height="28"><path d="M4.6 2.4 L25.7 2.4 L25.7 19.8 L12.8 19.8 L4.6 25.4 Z" fill="#dc3f36" stroke="#fff" stroke-width="1.6" stroke-linejoin="round"/></svg>
<svg class="a" style="left:1506.63px;top:935px" width="30" height="28"><path d="M4.6 2.4 L25.7 2.4 L25.7 19.8 L12.8 19.8 L4.6 25.4 Z" fill="#dc3f36" stroke="#fff" stroke-width="1.6" stroke-linejoin="round"/></svg>
<svg class="a" style="left:1702.10px;top:935px" width="30" height="28"><path d="M4.6 2.4 L25.7 2.4 L25.7 19.8 L12.8 19.8 L4.6 25.4 Z" fill="#dc3f36" stroke="#fff" stroke-width="1.6" stroke-linejoin="round"/></svg>
<svg class="a" style="left:2027.89px;top:935px" width="30" height="28"><path d="M4.6 2.4 L25.7 2.4 L25.7 19.8 L12.8 19.8 L4.6 25.4 Z" fill="#dc3f36" stroke="#fff" stroke-width="1.6" stroke-linejoin="round"/></svg>
<div id="t_allpos" class="t" style="left:38.71px;top:43.25px;font-size:28.488px;font-weight:400;color:#191b23;transform:scaleX(1.0301);text-rendering:geometricPrecision;-webkit-text-stroke:0.80px #191b23;">All Positions</div>
<div id="t_org" class="t" style="left:233.40px;top:43.25px;font-size:28.488px;font-weight:400;color:#191b23;transform:scaleX(1.0294);text-rendering:geometricPrecision;-webkit-text-stroke:0.80px #191b23;">Organic</div>
<div id="t_serp" class="t" style="left:371.07px;top:43.25px;font-size:28.488px;font-weight:400;color:#191b23;transform:scaleX(0.9748);text-rendering:geometricPrecision;-webkit-text-stroke:0.80px #191b23;">SERP Features</div>
<div id="t_filter" class="t" style="left:37.00px;top:131.49px;font-size:28.779px;font-weight:400;color:#898d9a;transform:scaleX(1.0480);text-rendering:geometricPrecision;-webkit-text-stroke:0.60px #898d9a;">Filter by keyword</div>
<div id="t_pos" class="t" style="left:509.35px;top:131.49px;font-size:28.779px;font-weight:400;color:#898d9a;transform:scaleX(1.0253);text-rendering:geometricPrecision;-webkit-text-stroke:0.60px #898d9a;">Positions</div>
<div id="t_vol" class="t" style="left:731.58px;top:131.49px;font-size:28.779px;font-weight:400;color:#898d9a;transform:scaleX(1.0148);text-rendering:geometricPrecision;-webkit-text-stroke:0.60px #898d9a;">Volume</div>
<div id="t_kd" class="t" style="left:928.63px;top:131.49px;font-size:28.779px;font-weight:400;color:#898d9a;transform:scaleX(0.9805);text-rendering:geometricPrecision;-webkit-text-stroke:0.60px #898d9a;">KD</div>
<div id="t_intent" class="t" style="left:1066.84px;top:131.49px;font-size:28.779px;font-weight:400;color:#898d9a;transform:scaleX(1.0442);text-rendering:geometricPrecision;-webkit-text-stroke:0.60px #898d9a;">Intent</div>
<div id="t_serpf" class="t" style="left:1243.20px;top:131.49px;font-size:28.779px;font-weight:400;color:#898d9a;transform:scaleX(0.9637);text-rendering:geometricPrecision;-webkit-text-stroke:0.60px #898d9a;">SERP Features</div>
<div id="t_adv" class="t" style="left:1537.39px;top:131.49px;font-size:28.779px;font-weight:400;color:#898d9a;transform:scaleX(1.0500);text-rendering:geometricPrecision;-webkit-text-stroke:0.60px #898d9a;">Advanced filters</div>
<div id="t_kw" class="t" style="left:59.57px;top:250.28px;font-size:28.924px;font-weight:400;color:#191b23;transform:scaleX(1.0262);text-rendering:geometricPrecision;-webkit-text-stroke:0.80px #191b23;">Keywords</div>
<div id="t_295" class="t" style="left:60.02px;top:295.22px;font-size:51.744px;font-weight:700;color:#191b23;transform:scaleX(0.9916);text-rendering:geometricPrecision;">295K</div>
<div id="t_262" class="t" style="left:190.96px;top:317.50px;font-size:25.291px;font-weight:400;color:#256f5a;transform:scaleX(1.0030);text-rendering:geometricPrecision;-webkit-text-stroke:0.20px #256f5a;">2.62%</div>
<div id="t_traffic" class="t" style="left:692.04px;top:250.28px;font-size:28.924px;font-weight:400;color:#191b23;transform:scaleX(1.0564);text-rendering:geometricPrecision;-webkit-text-stroke:0.80px #191b23;">Traffic</div>
<div id="t_17" class="t" style="left:688.37px;top:295.22px;font-size:51.744px;font-weight:700;color:#191b23;transform:scaleX(0.9221);text-rendering:geometricPrecision;">1.7M</div>
<div id="t_585" class="t" style="left:801.45px;top:317.50px;font-size:25.291px;font-weight:400;color:#256f5a;transform:scaleX(0.9835);text-rendering:geometricPrecision;-webkit-text-stroke:0.20px #256f5a;">5.85%</div>
<div id="t_tc" class="t" style="left:1301.34px;top:250.28px;font-size:28.924px;font-weight:400;color:#191b23;transform:scaleX(1.0414);text-rendering:geometricPrecision;-webkit-text-stroke:0.80px #191b23;">Traffic Cost</div>
<div id="t_31" class="t" style="left:1300.13px;top:295.22px;font-size:51.744px;font-weight:700;color:#191b23;transform:scaleX(0.9322);text-rendering:geometricPrecision;">$3.1M</div>
<div id="t_1134" class="t" style="left:1440.04px;top:317.50px;font-size:25.291px;font-weight:400;color:#256f5a;transform:scaleX(0.9407);text-rendering:geometricPrecision;-webkit-text-stroke:0.20px #256f5a;">11.34%</div>
<div id="t_title" class="t" style="left:59.90px;top:439.18px;font-size:33.430px;font-weight:700;color:#191b23;transform:scaleX(0.9710);text-rendering:geometricPrecision;">Organic Keywords Trend</div>
<div id="t_top3" class="t" style="left:109.04px;top:532.18px;font-size:28.343px;font-weight:400;color:#191b23;transform:scaleX(1.0608);text-rendering:geometricPrecision;-webkit-text-stroke:0.80px #191b23;">Top 3</div>
<div id="t_410" class="t" style="left:264.24px;top:532.18px;font-size:28.343px;font-weight:400;color:#191b23;transform:scaleX(1.0172);text-rendering:geometricPrecision;-webkit-text-stroke:0.80px #191b23;">4-10</div>
<div id="t_1120" class="t" style="left:401.49px;top:532.18px;font-size:28.343px;font-weight:400;color:#191b23;transform:scaleX(0.9995);text-rendering:geometricPrecision;-webkit-text-stroke:0.80px #191b23;">11-20</div>
<div id="t_2150" class="t" style="left:552.36px;top:532.18px;font-size:28.343px;font-weight:400;color:#191b23;transform:scaleX(1.0342);text-rendering:geometricPrecision;-webkit-text-stroke:0.80px #191b23;">21-50</div>
<div id="t_51100" class="t" style="left:708.22px;top:532.18px;font-size:28.343px;font-weight:400;color:#191b23;transform:scaleX(0.9845);text-rendering:geometricPrecision;-webkit-text-stroke:0.80px #191b23;">51-100</div>
<div id="t_serpl" class="t" style="left:876.18px;top:532.18px;font-size:28.343px;font-weight:400;color:#191b23;transform:scaleX(0.9784);text-rendering:geometricPrecision;-webkit-text-stroke:0.80px #191b23;">SERP Features</div>
<div id="t_notes" class="t" style="left:1175.08px;top:532.18px;font-size:28.343px;font-weight:400;color:#191b23;transform:scaleX(1.0412);text-rendering:geometricPrecision;-webkit-text-stroke:0.80px #191b23;">Notes</div>
<div id="t_1m" class="t" style="left:1850.52px;top:532.25px;font-size:28.488px;font-weight:400;color:#191b23;transform:scaleX(0.9716);text-rendering:geometricPrecision;-webkit-text-stroke:0.80px #191b23;">1M</div>
<div id="t_6m" class="t" style="left:1920.92px;top:532.25px;font-size:28.488px;font-weight:400;color:#191b23;transform:scaleX(1.0831);text-rendering:geometricPrecision;-webkit-text-stroke:0.80px #191b23;">6M</div>
<div id="t_1y" class="t" style="left:1996.39px;top:532.25px;font-size:28.488px;font-weight:400;color:#191b23;transform:scaleX(0.9334);text-rendering:geometricPrecision;-webkit-text-stroke:0.80px #191b23;">1Y</div>
<div id="t_2y" class="t" style="left:2064.06px;top:532.25px;font-size:28.488px;font-weight:400;color:#191b23;transform:scaleX(1.0382);text-rendering:geometricPrecision;-webkit-text-stroke:0.80px #191b23;">2Y</div>
<div id="t_all" class="t" style="left:2133.91px;top:532.25px;font-size:28.488px;font-weight:400;color:#191b23;transform:scaleX(1.0488);text-rendering:geometricPrecision;-webkit-text-stroke:0.80px #191b23;">All time</div>
<div id="t_400k" class="t" style="left:66.57px;top:648.75px;font-size:24.709px;font-weight:400;color:#6c6e79;transform:scaleX(1.0553);text-rendering:geometricPrecision;-webkit-text-stroke:0.40px #6c6e79;">400K</div>
<div id="t_200k" class="t" style="left:66.06px;top:793.15px;font-size:24.709px;font-weight:400;color:#6c6e79;transform:scaleX(1.0640);text-rendering:geometricPrecision;-webkit-text-stroke:0.40px #6c6e79;">200K</div>
<div id="t_0" class="t" style="left:112.80px;top:937.35px;font-size:24.709px;font-weight:400;color:#6c6e79;transform:scaleX(1.0699);text-rendering:geometricPrecision;-webkit-text-stroke:0.40px #6c6e79;">0</div>
<div id="t_x0" class="t" style="left:183.83px;top:971.42px;font-size:24.855px;font-weight:400;color:#6c6e79;transform:scaleX(1.0521);text-rendering:geometricPrecision;-webkit-text-stroke:0.40px #6c6e79;">Jul 30</div>
<div id="t_x1" class="t" style="left:318.91px;top:971.42px;font-size:24.855px;font-weight:400;color:#6c6e79;transform:scaleX(0.9687);text-rendering:geometricPrecision;-webkit-text-stroke:0.40px #6c6e79;">Aug 1</div>
<div id="t_x2" class="t" style="left:446.72px;top:971.42px;font-size:24.855px;font-weight:400;color:#6c6e79;transform:scaleX(1.0207);text-rendering:geometricPrecision;-webkit-text-stroke:0.40px #6c6e79;">Aug 3</div>
<div id="t_x3" class="t" style="left:577.02px;top:971.42px;font-size:24.855px;font-weight:400;color:#6c6e79;transform:scaleX(1.0079);text-rendering:geometricPrecision;-webkit-text-stroke:0.40px #6c6e79;">Aug 5</div>
<div id="t_x4" class="t" style="left:707.52px;top:971.42px;font-size:24.855px;font-weight:400;color:#6c6e79;transform:scaleX(1.0080);text-rendering:geometricPrecision;-webkit-text-stroke:0.40px #6c6e79;">Aug 7</div>
<div id="t_x5" class="t" style="left:837.52px;top:971.42px;font-size:24.855px;font-weight:400;color:#6c6e79;transform:scaleX(1.0186);text-rendering:geometricPrecision;-webkit-text-stroke:0.40px #6c6e79;">Aug 9</div>
<div id="t_x6" class="t" style="left:965.11px;top:971.42px;font-size:24.855px;font-weight:400;color:#6c6e79;transform:scaleX(0.9107);text-rendering:geometricPrecision;-webkit-text-stroke:0.40px #6c6e79;">Aug 11</div>
<div id="t_x7" class="t" style="left:1093.11px;top:971.42px;font-size:24.855px;font-weight:400;color:#6c6e79;transform:scaleX(0.9608);text-rendering:geometricPrecision;-webkit-text-stroke:0.40px #6c6e79;">Aug 13</div>
<div id="t_x8" class="t" style="left:1223.31px;top:971.42px;font-size:24.855px;font-weight:400;color:#6c6e79;transform:scaleX(0.9579);text-rendering:geometricPrecision;-webkit-text-stroke:0.40px #6c6e79;">Aug 15</div>
<div id="t_x9" class="t" style="left:1354.51px;top:971.42px;font-size:24.855px;font-weight:400;color:#6c6e79;transform:scaleX(0.9464);text-rendering:geometricPrecision;-webkit-text-stroke:0.40px #6c6e79;">Aug 17</div>
<div id="t_x10" class="t" style="left:1483.81px;top:971.42px;font-size:24.855px;font-weight:400;color:#6c6e79;transform:scaleX(0.9641);text-rendering:geometricPrecision;-webkit-text-stroke:0.40px #6c6e79;">Aug 19</div>
<div id="t_x11" class="t" style="left:1614.31px;top:971.42px;font-size:24.855px;font-weight:400;color:#6c6e79;transform:scaleX(0.9667);text-rendering:geometricPrecision;-webkit-text-stroke:0.40px #6c6e79;">Aug 21</div>
<div id="t_x12" class="t" style="left:1742.12px;top:971.42px;font-size:24.855px;font-weight:400;color:#6c6e79;transform:scaleX(1.0221);text-rendering:geometricPrecision;-webkit-text-stroke:0.40px #6c6e79;">Aug 23</div>
<div id="t_x13" class="t" style="left:1872.92px;top:971.42px;font-size:24.855px;font-weight:400;color:#6c6e79;transform:scaleX(1.0077);text-rendering:geometricPrecision;-webkit-text-stroke:0.40px #6c6e79;">Aug 25</div>
<div id="t_x14" class="t" style="left:2003.72px;top:971.42px;font-size:24.855px;font-weight:400;color:#6c6e79;transform:scaleX(1.0078);text-rendering:geometricPrecision;-webkit-text-stroke:0.40px #6c6e79;">Aug 27</div>
<div id="t_x15" class="t" style="left:2133.12px;top:971.42px;font-size:24.855px;font-weight:400;color:#6c6e79;transform:scaleX(1.0331);text-rendering:geometricPrecision;-webkit-text-stroke:0.40px #6c6e79;">Aug 29</div>
</body></html>
